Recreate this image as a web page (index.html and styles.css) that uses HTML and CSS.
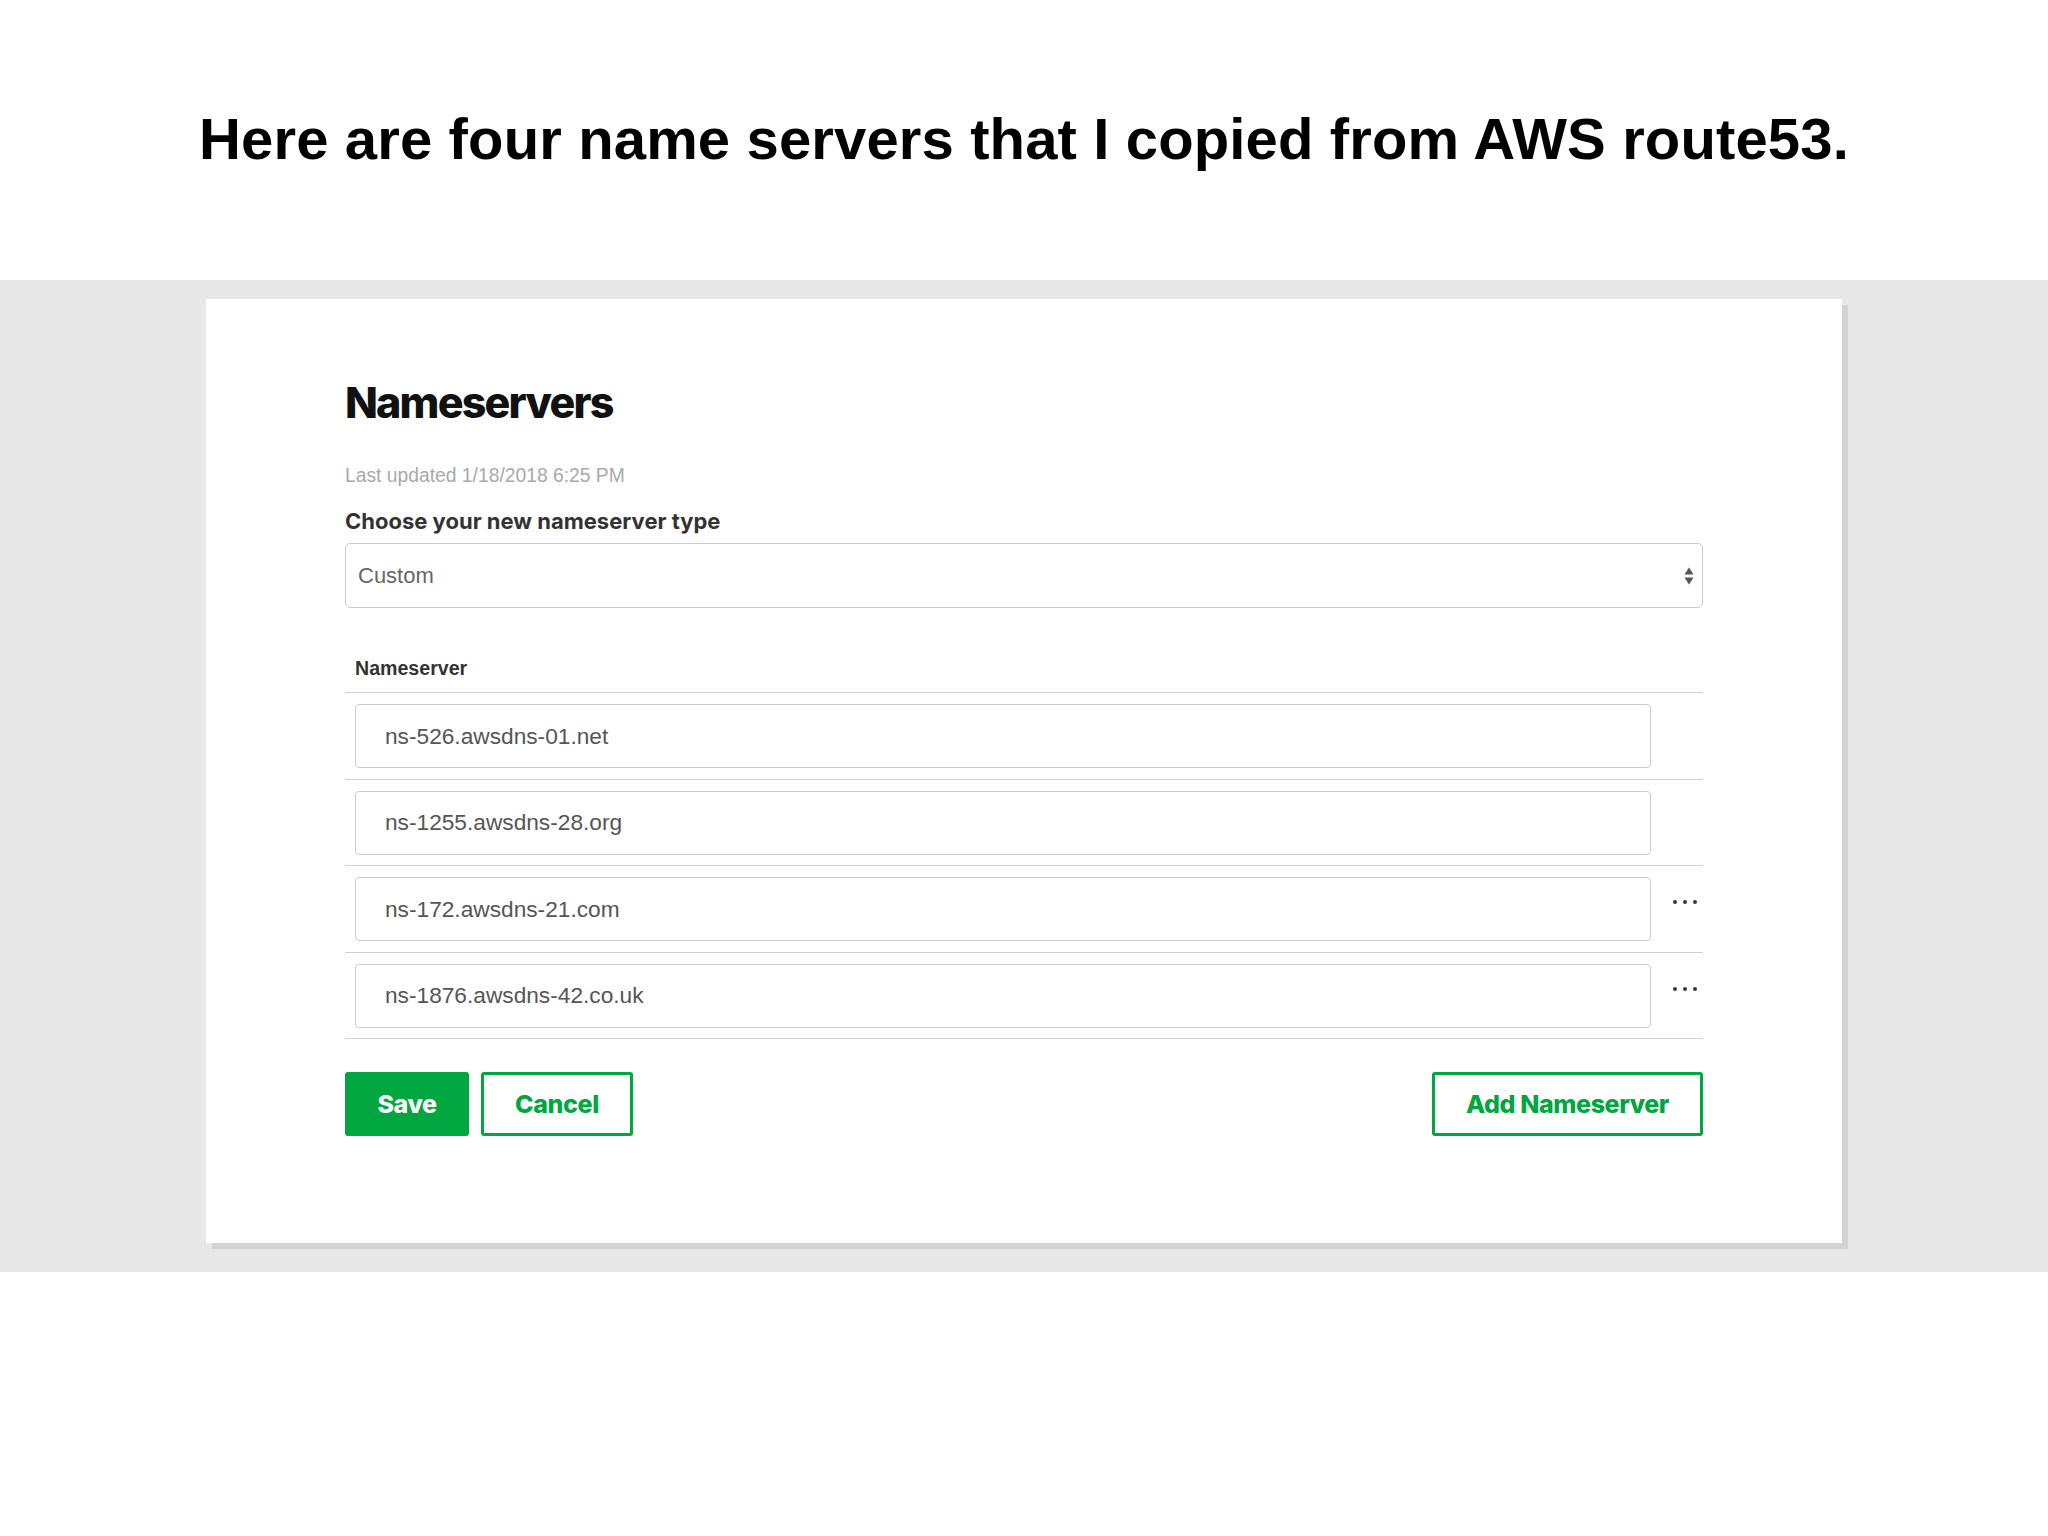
FILE: index.html
```html
<!DOCTYPE html>
<html lang="en">
<head>
<meta charset="utf-8">
<title>Nameservers</title>
<link rel="stylesheet" href="styles.css">
</head>
<body>
<header class="slide-title">
  <h1>Here are four name servers that I copied from AWS route53.</h1>
</header>
<section class="band">
  <div class="card">
    <h2 class="card-title">Nameservers</h2>
    <p class="updated">Last updated 1/18/2018 6:25 PM</p>
    <label class="field-label">Choose your new nameserver type</label>
    <div class="select">
      <span class="select-value">Custom</span>
      <svg class="select-arrows" width="12" height="20" viewBox="0 0 12 20" aria-hidden="true">
        <polygon points="1.5,8.5 6,1.5 10.5,8.5" fill="#555"/>
        <polygon points="1.5,11.5 6,18.5 10.5,11.5" fill="#555"/>
      </svg>
    </div>
    <div class="ns-table">
      <div class="ns-head">Nameserver</div>
      <ul class="ns-rows">
        <li class="ns-row"><input class="ns-input" type="text" value="ns-526.awsdns-01.net"><span class="ns-actions"></span></li>
        <li class="ns-row"><input class="ns-input" type="text" value="ns-1255.awsdns-28.org"><span class="ns-actions"></span></li>
        <li class="ns-row"><input class="ns-input" type="text" value="ns-172.awsdns-21.com"><span class="ns-actions"><span class="dots"><i></i><i></i><i></i></span></span></li>
        <li class="ns-row"><input class="ns-input" type="text" value="ns-1876.awsdns-42.co.uk"><span class="ns-actions"><span class="dots"><i></i><i></i><i></i></span></span></li>
      </ul>
    </div>
    <div class="button-bar">
      <div class="button-group">
        <button class="btn btn-primary save">Save</button>
        <button class="btn btn-outline cancel">Cancel</button>
      </div>
      <button class="btn btn-outline add">Add Nameserver</button>
    </div>
  </div>
</section>
</body>
</html>
```

FILE: styles.css
```css
html, body {
  margin: 0;
  padding: 0;
  background: #ffffff;
}

body {
  width: 2048px;
  min-height: 1536px;
  font-family: "Liberation Sans", Arial, sans-serif;
}

.slide-title {
  height: 280px;
  box-sizing: border-box;
  padding-top: 106px;
}

.slide-title h1 {
  margin: 0;
  text-align: center;
  font-family: "Liberation Sans", Arial, sans-serif;
  font-weight: 700;
  font-size: 58px;
  line-height: 66px;
  letter-spacing: 0.14px;
  color: #000;
}

.band {
  background: #e8e8e8;
  padding: 19px 0 29px;
}

.card {
  width: 1636px;
  margin: 0 auto;
  box-sizing: border-box;
  background: #fff;
  padding: 77px 139px 107px;
  box-shadow: 6px 6px 0 #d3d3d3;
}

.card-title {
  margin: 0;
  font-family: "Inter", "Lato", sans-serif;
  font-weight: 800;
  font-size: 43px;
  line-height: 52px;
  letter-spacing: -1.8px;
  color: #111;
}

.updated {
  margin: 37px 0 0;
  font-size: 19.3px;
  line-height: 22px;
  color: #a9a9a9;
}

.field-label {
  display: block;
  margin-top: 21px;
  font-family: "Inter", "Lato", sans-serif;
  font-weight: 700;
  font-size: 22px;
  line-height: 26px;
  color: #333;
}

.select {
  margin-top: 9px;
  height: 65px;
  box-sizing: border-box;
  border: 1px solid #cccccc;
  border-radius: 5px;
  padding: 0 7px 0 12px;
  display: flex;
  align-items: center;
  justify-content: space-between;
}

.select-value {
  font-size: 22px;
  color: #666;
}

.select-arrows {
  display: block;
}

.ns-table {
  margin-top: 49px;
}

.ns-head {
  padding: 0 0 13px 10px;
  font-weight: 700;
  font-size: 19.6px;
  line-height: 22px;
  color: #333;
}

.ns-rows {
  list-style: none;
  margin: 0;
  padding: 0;
  border-top: 1px solid #d0d0d0;
}

.ns-row {
  display: flex;
  align-items: center;
  padding: 11px 0 10.5px 10px;
  border-bottom: 1px solid #d0d0d0;
}

.ns-input {
  width: 1296px;
  height: 64px;
  box-sizing: border-box;
  margin: 0;
  border: 1px solid #cccccc;
  border-radius: 4px;
  padding: 0 29px;
  font-family: "Liberation Sans", Arial, sans-serif;
  font-size: 22.7px;
  color: #555;
  background: #fff;
  outline: none;
}

.ns-actions {
  flex: 1;
  display: flex;
  align-items: center;
  padding-left: 22px;
  height: 64px;
}

.dots {
  display: flex;
  gap: 6px;
  margin-bottom: 14px;
}

.dots i {
  display: block;
  width: 4px;
  height: 4px;
  border-radius: 50%;
  background: #3a3a3a;
}

.button-bar {
  margin-top: 33px;
  display: flex;
  justify-content: space-between;
  align-items: center;
}

.button-group {
  display: flex;
  gap: 12px;
}

.btn {
  height: 64px;
  box-sizing: border-box;
  margin: 0;
  padding: 0;
  border-radius: 3px;
  font-family: "Inter", "Lato", sans-serif;
  font-weight: 800;
  font-size: 25px;
  letter-spacing: -0.4px;
  cursor: pointer;
}

.btn-primary {
  background: #00a63f;
  border: 3px solid #00a63f;
  color: #fff;
}

.btn-outline {
  background: #fff;
  border: 3px solid #00a63f;
  color: #00a63f;
}

.save {
  width: 124px;
}

.cancel {
  width: 152px;
}

.add {
  width: 271px;
}
```
